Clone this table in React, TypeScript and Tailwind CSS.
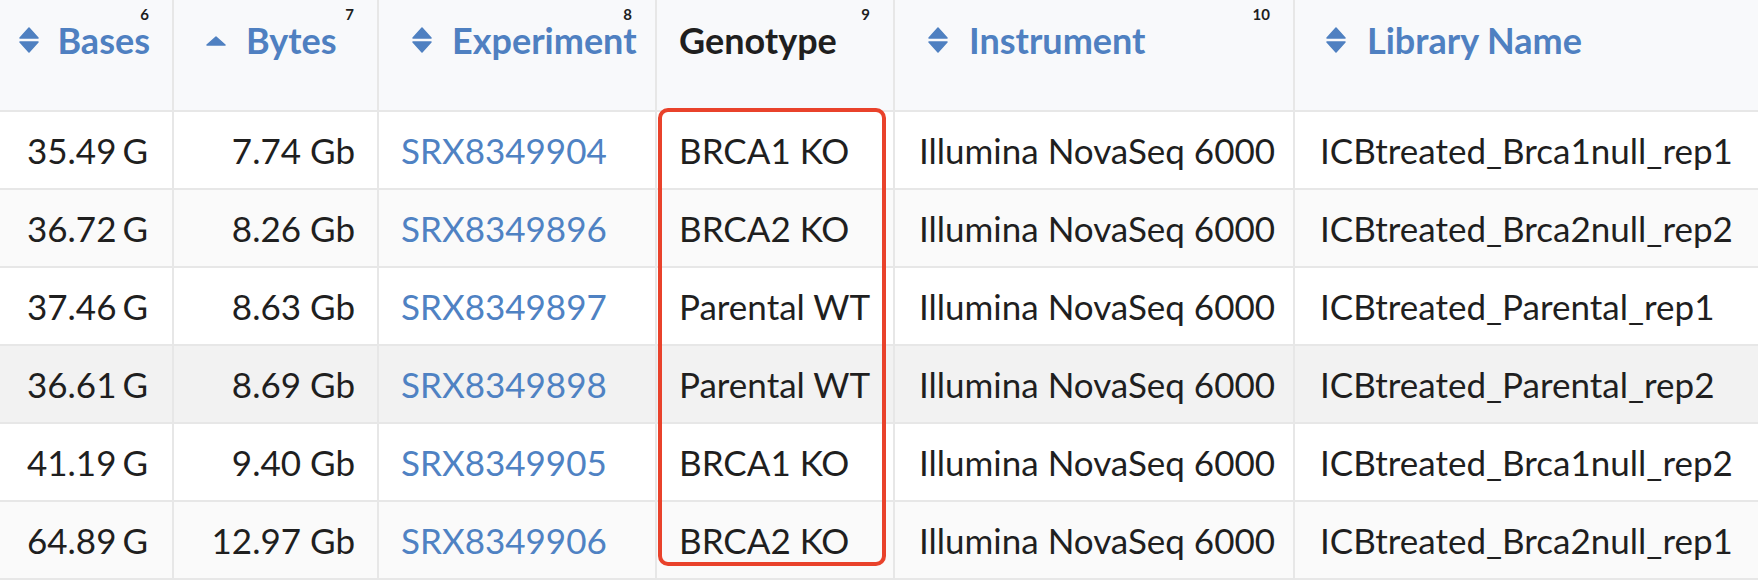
import React from "react";

const rows = [
  { bases: "35.49 G", bytes: "7.74 Gb", exp: "SRX8349904", geno: "BRCA1 KO", inst: "Illumina NovaSeq 6000", lib: "ICBtreated_Brca1null_rep1", bg: "bg-white" },
  { bases: "36.72 G", bytes: "8.26 Gb", exp: "SRX8349896", geno: "BRCA2 KO", inst: "Illumina NovaSeq 6000", lib: "ICBtreated_Brca2null_rep2", bg: "bg-[#fafafa]" },
  { bases: "37.46 G", bytes: "8.63 Gb", exp: "SRX8349897", geno: "Parental WT", inst: "Illumina NovaSeq 6000", lib: "ICBtreated_Parental_rep1", bg: "bg-white" },
  { bases: "36.61 G", bytes: "8.69 Gb", exp: "SRX8349898", geno: "Parental WT", inst: "Illumina NovaSeq 6000", lib: "ICBtreated_Parental_rep2", bg: "bg-[#f2f2f2]" },
  { bases: "41.19 G", bytes: "9.40 Gb", exp: "SRX8349905", geno: "BRCA1 KO", inst: "Illumina NovaSeq 6000", lib: "ICBtreated_Brca1null_rep2", bg: "bg-white" },
  { bases: "64.89 G", bytes: "12.97 Gb", exp: "SRX8349906", geno: "BRCA2 KO", inst: "Illumina NovaSeq 6000", lib: "ICBtreated_Brca2null_rep1", bg: "bg-[#fafafa]" },
];

function SortBoth() {
  return (
    <svg width="20" height="26" viewBox="0 0 20 26" className="shrink-0">
      <polygon points="10,1 19,11 1,11" fill="#4f80c1" stroke="#4f80c1" strokeWidth="1.5" strokeLinejoin="round" />
      <polygon points="1,15 19,15 10,25" fill="#4f80c1" stroke="#4f80c1" strokeWidth="1.5" strokeLinejoin="round" />
    </svg>
  );
}

function SortUp() {
  return (
    <svg width="20" height="10" viewBox="0 0 20 10" className="shrink-0 mt-[1px]">
      <polygon points="10,1 19,9 1,9" fill="#4f80c1" stroke="#4f80c1" strokeWidth="1.5" strokeLinejoin="round" />
    </svg>
  );
}

function Num({ n }: { n: string }) {
  return (
    <span className="absolute top-[7px] right-[23px] text-[15px] font-bold text-[#1e1e1e] leading-[15px]">{n}</span>
  );
}

export default function App() {
  const cols = "grid grid-cols-[174px_205px_278px_238px_400px_1fr]";
  const cellB = "border-r-2 border-b-2 border-[#e7e7e7]";
  return (
    <div
      className="relative w-[1758px] h-[580px] overflow-hidden bg-white text-[#1f1f1f]"
      style={{ fontFamily: "Lato, 'Noto Sans', sans-serif" }}
    >
      <div className={`${cols} h-[112px] bg-[#f8f9fb] text-[36px] font-bold text-[#4f80c1]`}>
        <div className={`relative ${cellB} flex items-start justify-end pr-[22px] pt-[22px]`}>
          <div className="flex items-center gap-[18px] h-[36px]">
            <SortBoth />
            <span className="leading-[36px]">Bases</span>
          </div>
          <Num n="6" />
        </div>
        <div className={`relative ${cellB} flex items-start pl-[32px] pt-[22px]`}>
          <div className="flex items-center gap-[20px] h-[36px]">
            <SortUp />
            <span className="leading-[36px]">Bytes</span>
          </div>
          <Num n="7" />
        </div>
        <div className={`relative ${cellB} flex items-start pl-[33px] pt-[22px]`}>
          <div className="flex items-center gap-[20px] h-[36px]">
            <SortBoth />
            <span className="leading-[36px]">Experiment</span>
          </div>
          <Num n="8" />
        </div>
        <div className={`relative ${cellB} flex items-start pl-[22px] pt-[22px] text-[#1f1f1f]`}>
          <span className="leading-[36px]">Genotype</span>
          <Num n="9" />
        </div>
        <div className={`relative ${cellB} flex items-start pl-[33px] pt-[22px]`}>
          <div className="flex items-center gap-[21px] h-[36px]">
            <SortBoth />
            <span className="leading-[36px]">Instrument</span>
          </div>
          <Num n="10" />
        </div>
        <div className={`relative border-b-2 border-[#e7e7e7] flex items-start pl-[31px] pt-[22px]`}>
          <div className="flex items-center gap-[21px] h-[36px]">
            <SortBoth />
            <span className="leading-[36px]">Library Name</span>
          </div>
        </div>
      </div>
      {rows.map((r, i) => (
        <div key={i} className={`${cols} h-[78px] ${r.bg} text-[35px]`}>
          <div className={`${cellB} flex items-center justify-end pr-[24px] [word-spacing:-3px]`}>{r.bases}</div>
          <div className={`${cellB} flex items-center justify-end pr-[22px]`}>{r.bytes}</div>
          <div className={`${cellB} flex items-center pl-[22px] text-[#4f82c3]`}>{r.exp}</div>
          <div className={`${cellB} flex items-center pl-[22px]`}>{r.geno}</div>
          <div className={`${cellB} flex items-center pl-[24px]`}>{r.inst}</div>
          <div className="border-b-2 border-[#e7e7e7] flex items-center pl-[25px]">{r.lib}</div>
        </div>
      ))}
      <div className="absolute left-[658px] top-[108px] w-[228px] h-[458px] border-[4px] border-[#e9422b] rounded-[10px] pointer-events-none" />
    </div>
  );
}
